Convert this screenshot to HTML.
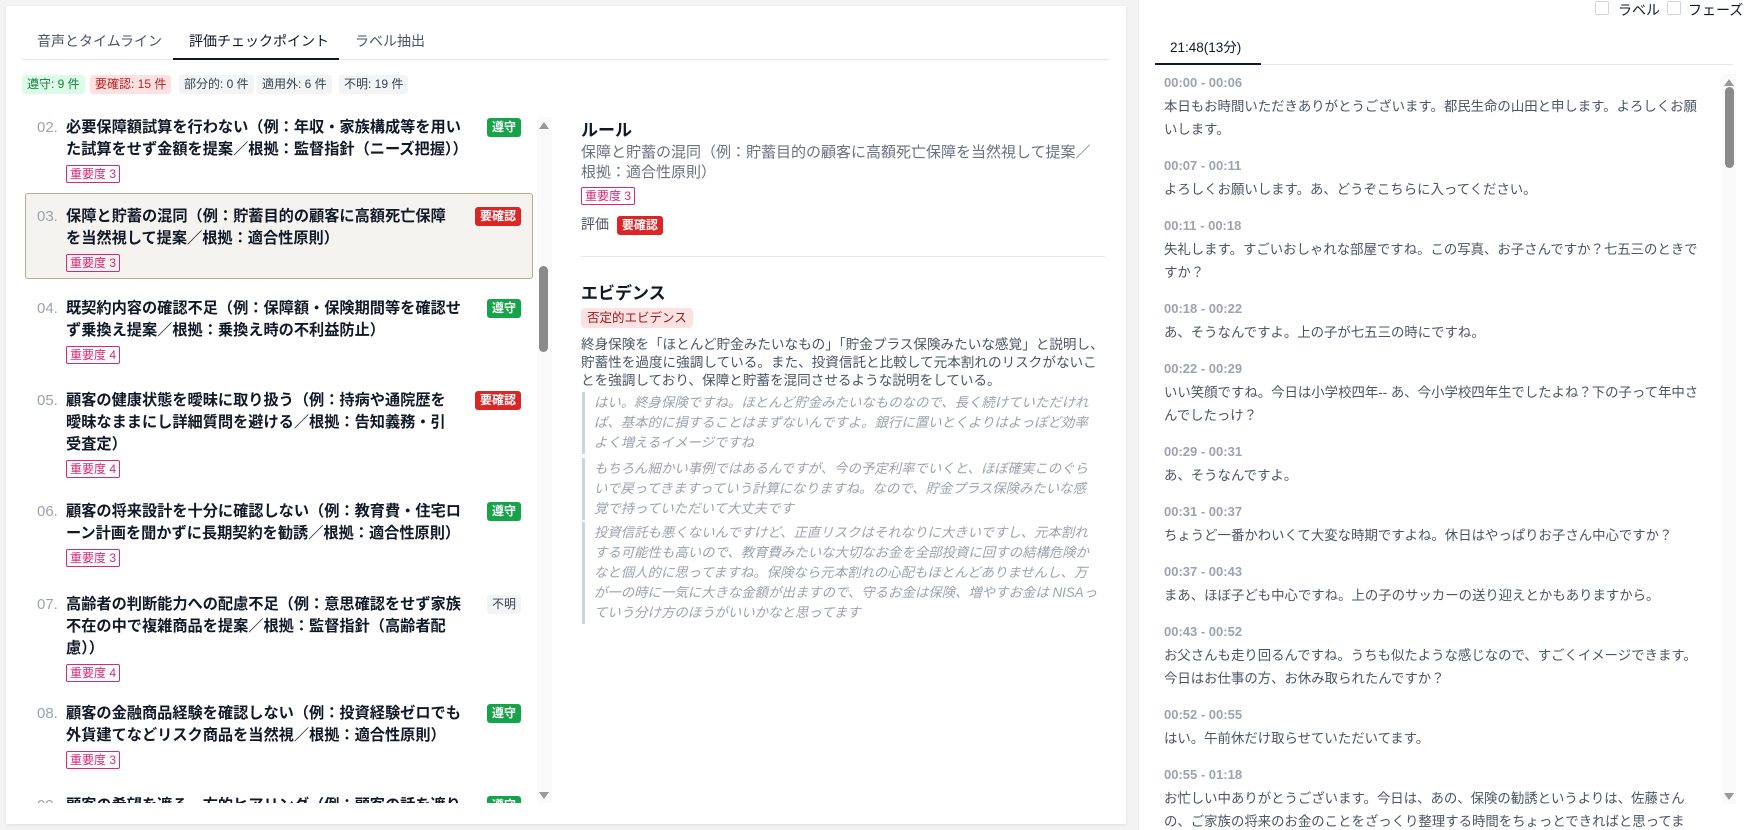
<!DOCTYPE html>
<html><head><meta charset="utf-8"><style>
*{box-sizing:border-box;margin:0;padding:0}
body{width:1744px;height:830px;overflow:hidden;background:#f3f3f3;font-family:"Liberation Sans","Noto Sans CJK JP",sans-serif;color:#1f2937;position:relative}
.abs{position:absolute}
.card{position:absolute;left:6px;top:6px;width:1120px;height:818px;background:#fff;box-shadow:0 1px 3px rgba(0,0,0,.08)}
.tab{position:absolute;top:31px;font-size:14px;color:#4b5563}
.chip{position:absolute;top:75px;height:19px;line-height:19px;font-size:12px;padding:0 5px;border-radius:3px;background:#f3f4f6;color:#374151}
.item{position:absolute;left:25px;width:508px}
.num{position:absolute;left:12px;font-size:15px;color:#9ca3af;line-height:22px}
.ttl{position:absolute;left:41px;font-size:15.2px;font-weight:bold;line-height:22px;color:#111827;white-space:nowrap}
.sev{display:inline-block;border:1px solid #db2777;color:#db2777;font-size:12px;line-height:16px;padding:0 3px;border-radius:2px;font-weight:normal;margin-top:4px}
.b{position:absolute;right:0;font-size:12px;font-weight:bold;color:#fff;padding:0 5px;line-height:19px;border-radius:3px}
.g{background:#16a34a}.r{background:#dc2626}.u{background:#f3f4f6;color:#374151;font-weight:normal}
.q{position:absolute;left:582px;width:530px;border-left:3px solid #cbd5e1;padding:1px 0 1px 9px;font-style:italic;color:#9ca3af;font-size:13.4px;line-height:20px;white-space:nowrap}
.tm{font-size:13px;font-weight:bold;color:#9ca3af;line-height:20px}
.tx{font-size:13.4px;color:#4b5563;line-height:23px;margin-top:2px}
</style></head><body>
<div class="card"></div>
<div class="tab" style="left:37px">音声とタイムライン</div>
<div class="tab" style="left:189px;color:#111827">評価チェックポイント</div>
<div class="tab" style="left:355px">ラベル抽出</div>
<div class="abs" style="left:22px;top:59px;width:1087px;height:1px;background:#e5e7eb"></div>
<div class="abs" style="left:173px;top:58px;width:166px;height:2px;background:#111827"></div>
<div class="chip" style="left:22px;background:#dcfce7;color:#15803d">遵守: 9 件</div>
<div class="chip" style="left:90px;background:#fee2e2;color:#b91c1c">要確認: 15 件</div>
<div class="chip" style="left:179px">部分的: 0 件</div>
<div class="chip" style="left:257px">適用外: 6 件</div>
<div class="chip" style="left:339px">不明: 19 件</div>

<div class="abs" style="left:25px;top:117px;width:508px;height:686px;overflow:hidden">
 <div class="item" style="left:0;top:0"><span class="num" style="top:0">02.</span><div class="ttl" style="top:0">必要保障額試算を行わない（例：年収・家族構成等を用い<br>た試算をせず金額を提案／根拠：監督指針（ニーズ把握））<br><span class="sev">重要度 3</span></div><span class="b g" style="top:1px;right:12px">遵守</span></div>
 <div class="item" style="left:0;top:76px;height:86px;width:508px;background:#f4f3ef;border:1px solid #b9ad86;border-radius:3px"></div>
 <div class="item" style="left:0;top:89px"><span class="num">03.</span><div class="ttl">保障と貯蓄の混同（例：貯蓄目的の顧客に高額死亡保障<br>を当然視して提案／根拠：適合性原則）<br><span class="sev">重要度 3</span></div><span class="b r" style="top:1px;right:12px">要確認</span></div>
 <div class="item" style="left:0;top:181px"><span class="num">04.</span><div class="ttl">既契約内容の確認不足（例：保障額・保険期間等を確認せ<br>ず乗換え提案／根拠：乗換え時の不利益防止）<br><span class="sev">重要度 4</span></div><span class="b g" style="top:1px;right:12px">遵守</span></div>
 <div class="item" style="left:0;top:273px"><span class="num">05.</span><div class="ttl">顧客の健康状態を曖昧に取り扱う（例：持病や通院歴を<br>曖昧なままにし詳細質問を避ける／根拠：告知義務・引<br>受査定）<br><span class="sev">重要度 4</span></div><span class="b r" style="top:1px;right:12px">要確認</span></div>
 <div class="item" style="left:0;top:384px"><span class="num">06.</span><div class="ttl">顧客の将来設計を十分に確認しない（例：教育費・住宅ロ<br>ーン計画を聞かずに長期契約を勧誘／根拠：適合性原則）<br><span class="sev">重要度 3</span></div><span class="b g" style="top:1px;right:12px">遵守</span></div>
 <div class="item" style="left:0;top:477px"><span class="num">07.</span><div class="ttl">高齢者の判断能力への配慮不足（例：意思確認をせず家族<br>不在の中で複雑商品を提案／根拠：監督指針（高齢者配<br>慮））<br><span class="sev">重要度 4</span></div><span class="b u" style="top:1px;right:12px">不明</span></div>
 <div class="item" style="left:0;top:586px"><span class="num">08.</span><div class="ttl">顧客の金融商品経験を確認しない（例：投資経験ゼロでも<br>外貨建てなどリスク商品を当然視／根拠：適合性原則）<br><span class="sev">重要度 3</span></div><span class="b g" style="top:1px;right:12px">遵守</span></div>
 <div class="item" style="left:0;top:678px"><span class="num">09.</span><div class="ttl">顧客の希望を遮る一方的ヒアリング（例：顧客の話を遮り</div><span class="b g" style="top:1px;right:12px">遵守</span></div>
</div>
<div class="abs" style="left:537px;top:117px;width:15px;height:686px;background:#fafafa"></div>
<div class="abs" style="left:539px;top:122px;width:0;height:0;border-left:5px solid transparent;border-right:5px solid transparent;border-bottom:7px solid #999"></div>
<div class="abs" style="left:539px;top:792px;width:0;height:0;border-left:5px solid transparent;border-right:5px solid transparent;border-top:7px solid #999"></div>
<div class="abs" style="left:539px;top:266px;width:9px;height:86px;background:#8a8a8a;border-radius:5px"></div>

<div class="abs" style="left:581px;top:116px;font-size:17px;font-weight:bold;color:#111827">ルール</div>
<div class="abs" style="left:581px;top:143px;font-size:15px;line-height:20px;color:#6b7280;white-space:nowrap">保障と貯蓄の混同（例：貯蓄目的の顧客に高額死亡保障を当然視して提案／<br>根拠：適合性原則）</div>
<div class="abs" style="left:581px;top:187px"><span class="sev" style="margin:0">重要度 3</span></div>
<div class="abs" style="left:581px;top:214px;font-size:14px;color:#4b5563;line-height:20px">評価 <span style="display:inline-block;background:#dc2626;color:#fff;font-size:12px;font-weight:bold;padding:0 5px;border-radius:3px;line-height:19px;margin-left:4px">要確認</span></div>
<div class="abs" style="left:581px;top:256px;width:524px;height:1px;background:#e5e7eb"></div>
<div class="abs" style="left:581px;top:279px;font-size:17px;font-weight:bold;color:#111827">エビデンス</div>
<div class="abs" style="left:581px;top:308px;background:#fde2e2;color:#991b1b;font-size:12.5px;line-height:20px;padding:0 6px;border-radius:4px">否定的エビデンス</div>
<div class="abs" style="left:581px;top:336px;font-size:13.6px;line-height:18px;color:#4b5563;white-space:nowrap">終身保険を「ほとんど貯金みたいなもの」「貯金プラス保険みたいな感覚」と説明し、<br>貯蓄性を過度に強調している。また、投資信託と比較して元本割れのリスクがないこ<br>とを強調しており、保障と貯蓄を混同させるような説明をしている。</div>
<div class="q" style="top:392px">はい。終身保険ですね。ほとんど貯金みたいなものなので、長く続けていただけれ<br>ば、基本的に損することはまずないんですよ。銀行に置いとくよりはよっぽど効率<br>よく増えるイメージですね</div>
<div class="q" style="top:458px">もちろん細かい事例ではあるんですが、今の予定利率でいくと、ほぼ確実このぐら<br>いで戻ってきますっていう計算になりますね。なので、貯金プラス保険みたいな感<br>覚で持っていただいて大丈夫です</div>
<div class="q" style="top:522px">投資信託も悪くないんですけど、正直リスクはそれなりに大きいですし、元本割れ<br>する可能性も高いので、教育費みたいな大切なお金を全部投資に回すの結構危険か<br>なと個人的に思ってますね。保険なら元本割れの心配もほとんどありませんし、万<br>が一の時に一気に大きな金額が出ますので、守るお金は保険、増やすお金は NISAっ<br>ていう分け方のほうがいいかなと思ってます</div>

<div class="abs" style="left:1138px;top:0;width:606px;height:830px;background:#fff;border-left:1px solid #eee"></div>
<div class="abs" style="left:1595px;top:1px;width:14px;height:14px;border:1px solid #d1d5db;border-radius:2px"></div>
<div class="abs" style="left:1618px;top:0;font-size:14px;color:#111827;white-space:nowrap">ラベル</div>
<div class="abs" style="left:1667px;top:1px;width:14px;height:14px;border:1px solid #d1d5db;border-radius:2px"></div>
<div class="abs" style="left:1688px;top:0;font-size:14px;color:#111827;white-space:nowrap">フェーズ</div>
<div class="abs" style="left:1170px;top:36px;font-size:13.5px;color:#111827">21:48(13分)</div>
<div class="abs" style="left:1155px;top:64px;width:578px;height:1px;background:#e5e7eb"></div>
<div class="abs" style="left:1155px;top:63px;width:106px;height:2px;background:#111827"></div>
<div class="abs" style="left:1140px;top:66px;width:580px;height:764px;overflow:hidden">
<div style="position:absolute;left:24px;top:7px;width:545px">
<div class="tm">00:00 - 00:06</div><div class="tx">本日もお時間いただきありがとうございます。都民生命の山田と申します。よろしくお願いします。</div>
<div class="tm" style="margin-top:15px">00:07 - 00:11</div><div class="tx">よろしくお願いします。あ、どうぞこちらに入ってください。</div>
<div class="tm" style="margin-top:15px">00:11 - 00:18</div><div class="tx">失礼します。すごいおしゃれな部屋ですね。この写真、お子さんですか？七五三のときですか？</div>
<div class="tm" style="margin-top:15px">00:18 - 00:22</div><div class="tx">あ、そうなんですよ。上の子が七五三の時にですね。</div>
<div class="tm" style="margin-top:15px">00:22 - 00:29</div><div class="tx">いい笑顔ですね。今日は小学校四年-- あ、今小学校四年生でしたよね？下の子って年中さんでしたっけ？</div>
<div class="tm" style="margin-top:15px">00:29 - 00:31</div><div class="tx">あ、そうなんですよ。</div>
<div class="tm" style="margin-top:15px">00:31 - 00:37</div><div class="tx">ちょうど一番かわいくて大変な時期ですよね。休日はやっぱりお子さん中心ですか？</div>
<div class="tm" style="margin-top:15px">00:37 - 00:43</div><div class="tx">まあ、ほぼ子ども中心ですね。上の子のサッカーの送り迎えとかもありますから。</div>
<div class="tm" style="margin-top:15px">00:43 - 00:52</div><div class="tx">お父さんも走り回るんですね。うちも似たような感じなので、すごくイメージできます。今日はお仕事の方、お休み取られたんですか？</div>
<div class="tm" style="margin-top:15px">00:52 - 00:55</div><div class="tx">はい。午前休だけ取らせていただいてます。</div>
<div class="tm" style="margin-top:15px">00:55 - 01:18</div><div class="tx">お忙しい中ありがとうございます。今日は、あの、保険の勧誘というよりは、佐藤さんの、ご家族の将来のお金のことをざっくり整理する時間をちょっとできればと思ってます。</div>
</div></div>
<div class="abs" style="left:1722px;top:74px;width:14px;height:730px;background:#fafafa"></div>
<div class="abs" style="left:1724px;top:79px;width:0;height:0;border-left:5px solid transparent;border-right:5px solid transparent;border-bottom:7px solid #999"></div>
<div class="abs" style="left:1724px;top:793px;width:0;height:0;border-left:5px solid transparent;border-right:5px solid transparent;border-top:7px solid #999"></div>
<div class="abs" style="left:1725px;top:87px;width:9px;height:81px;background:#8a8a8a;border-radius:5px"></div>
</body></html>
